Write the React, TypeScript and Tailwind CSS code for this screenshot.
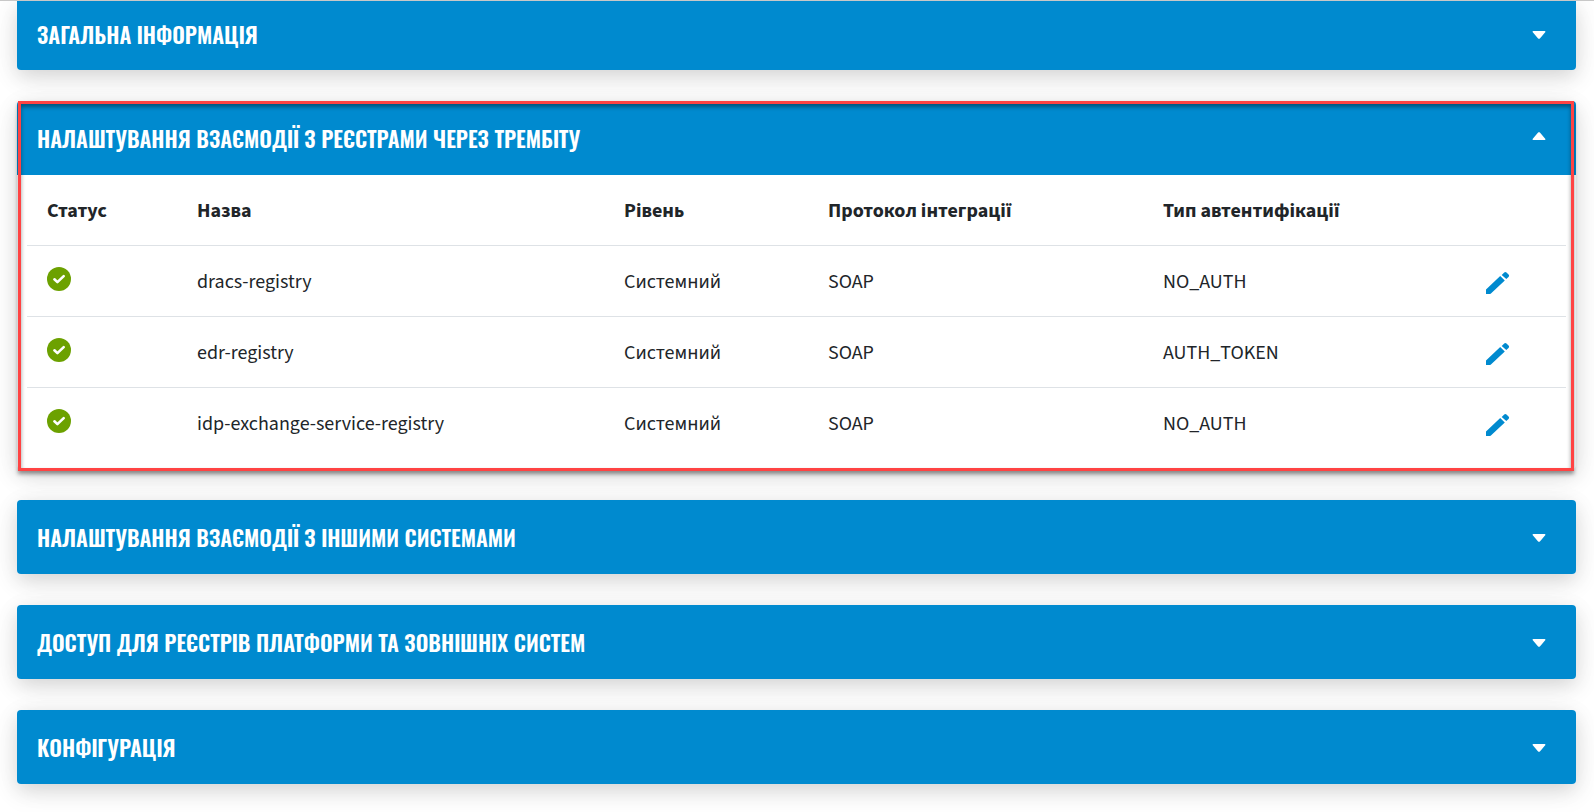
import { useState, type ReactNode } from "react";

type Integration = {
  name: string;
  level: string;
  protocol: string;
  auth: string;
};

const integrations: Integration[] = [
  { name: "dracs-registry", level: "Системний", protocol: "SOAP", auth: "NO_AUTH" },
  { name: "edr-registry", level: "Системний", protocol: "SOAP", auth: "AUTH_TOKEN" },
  { name: "idp-exchange-service-registry", level: "Системний", protocol: "SOAP", auth: "NO_AUTH" },
];

function Caret({ up }: { up: boolean }) {
  return (
    <svg viewBox="0 0 14 8" className={up ? "mb-1 h-2 w-3.5 rotate-180" : "mt-0.5 h-2 w-3.5"} aria-hidden="true">
      <path
        d="M1.3 0h11.4c.7 0 1 .8.5 1.3L7.9 7.4c-.5.6-1.3.6-1.8 0L.8 1.3C.3.8.6 0 1.3 0z"
        fill="currentColor"
      />
    </svg>
  );
}

function StatusIcon() {
  return (
    <svg viewBox="0 0 24 24" className="h-6 w-6" role="img" aria-label="Активний">
      <circle cx="12" cy="12" r="12" fill="#6ca100" />
      <path
        d="M7.4 12.3l3 2.8 6.3-6"
        fill="none"
        stroke="#fff"
        strokeWidth="2.6"
        strokeLinecap="round"
        strokeLinejoin="round"
      />
    </svg>
  );
}

function PencilIcon() {
  return (
    <svg viewBox="0 0 24 22" className="h-[22px] w-6" aria-hidden="true">
      <path
        d="M0 22v-4.4L14.2 4.1l4.6 4.4L5.2 21.3l-1 .7zM15.7 2.9L18 .7c.8-.8 1.7-.8 2.5-.1l2 1.9c.8.8.8 1.7 0 2.4l-2.2 2.2z"
        fill="#008acf"
      />
    </svg>
  );
}

function Section({
  title,
  open = false,
  clipped = false,
  children,
}: {
  title: string;
  open?: boolean;
  clipped?: boolean;
  children?: ReactNode;
}) {
  const [expanded, setExpanded] = useState(open);
  const showBody = expanded && Boolean(children);
  return (
    <section
      className={`relative bg-white shadow-[0_6px_20px_rgba(0,0,0,0.14),0_8px_36px_rgba(0,0,0,0.05)] ${
        clipped ? "rounded-b" : "rounded"
      }`}
    >
      <h2>
        <button
          type="button"
          aria-expanded={expanded}
          onClick={() => setExpanded(!expanded)}
          className={`flex w-full items-center justify-between bg-[#008acf] pr-[30px] pl-5 text-left font-['Oswald','Roboto_Condensed',sans-serif] text-[22px] leading-8 font-semibold text-white uppercase ${
            clipped ? "h-[69px] pb-1" : "h-[74px]"
          } ${clipped ? "rounded-b" : showBody ? "rounded-t" : "rounded"}`}
        >
          <span>{title}</span>
          <Caret up={expanded} />
        </button>
      </h2>
      {showBody && (
        <>
          <div className="p-2.5 pt-0">{children}</div>
          <div className="pointer-events-none absolute inset-x-0 top-0 -bottom-0.5 mr-0.5 ml-px border-[3px] border-[#ff4343] shadow-[0_3px_4px_rgba(0,0,0,0.4),inset_0_3px_4px_rgba(0,0,0,0.4)]" />
        </>
      )}
    </section>
  );
}

function IntegrationTable() {
  return (
    <table className="w-full table-fixed border-separate border-spacing-0 text-left text-[#212529]">
      <thead>
        <tr className="h-[71px] font-bold *:border-b *:border-[#dee2e6] *:px-5 *:pt-0.5">
          <th className="w-[150px]">Статус</th>
          <th>Назва</th>
          <th className="w-[204px]">Рівень</th>
          <th className="w-[335px]">Протокол інтеграції</th>
          <th className="w-[323px]">Тип автентифікації</th>
          <th className="w-[100px]" aria-label="Дії" />
        </tr>
      </thead>
      <tbody>
        {integrations.map((item) => (
          <tr key={item.name} className="h-[71px] *:border-b *:border-[#dee2e6] *:px-5 last:*:border-transparent">
            <td className="pb-1">
              <StatusIcon />
            </td>
            <td className="pt-px">{item.name}</td>
            <td className="pt-px">{item.level}</td>
            <td className="pt-px">{item.protocol}</td>
            <td className="pt-px">{item.auth}</td>
            <td className="pt-1">
              <button type="button" className="block" aria-label={`Редагувати ${item.name}`}>
                <PencilIcon />
              </button>
            </td>
          </tr>
        ))}
      </tbody>
    </table>
  );
}

export default function App() {
  return (
    <main className="flex min-h-screen flex-col gap-[31px] overflow-hidden border-t border-[#c8c8c8] bg-white pr-[18px] pl-[17px] font-['Source_Sans_3','Noto_Sans',sans-serif] text-[20px] leading-[30px]">
      <Section title="Загальна інформація" clipped />
      <Section title="Налаштування взаємодії з реєстрами через Трембіту" open>
        <IntegrationTable />
      </Section>
      <Section title="Налаштування взаємодії з іншими системами" />
      <Section title="Доступ для реєстрів платформи та зовнішніх систем" />
      <Section title="Конфігурація" />
    </main>
  );
}
